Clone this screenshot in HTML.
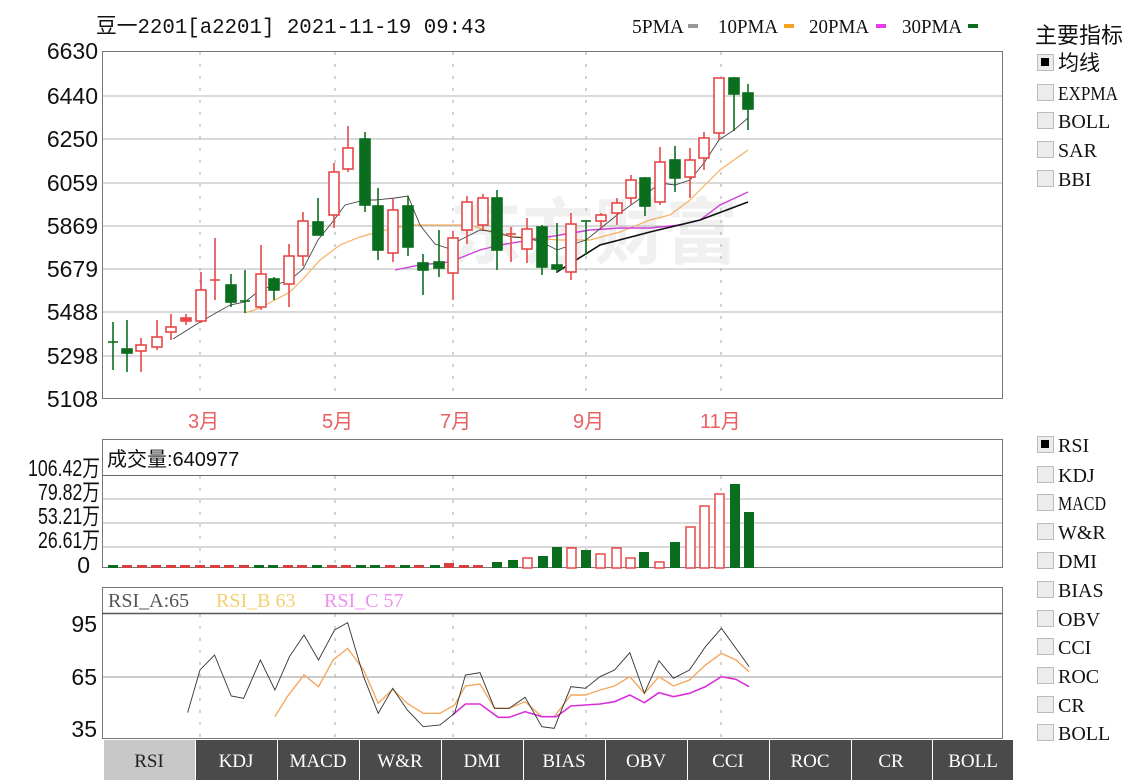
<!DOCTYPE html>
<html><head><meta charset="utf-8"><style>
html,body{margin:0;padding:0;background:#fff;width:1140px;height:780px;overflow:hidden}
svg{display:block}
.ax{font-family:"Liberation Sans",sans-serif;font-size:23px;fill:#111}
.mono{font-family:"Liberation Mono","Noto Sans CJK SC",monospace}
.cjk{font-family:"Liberation Sans","Noto Sans CJK SC",sans-serif}
.lbl{font-family:"Liberation Serif","Noto Serif CJK SC",serif;font-size:20px;fill:#111}
.tab{font-family:"Liberation Serif",serif;font-size:19px;fill:#fff}
</style></head><body>
<svg width="1140" height="780" viewBox="0 0 1140 780" xmlns="http://www.w3.org/2000/svg">
<!-- title -->
<text x="96" y="33" class="mono" font-size="21" fill="#111" textLength="390" lengthAdjust="spacingAndGlyphs">豆一2201[a2201] 2021-11-19 09:43</text>
<text x="632" y="33" class="lbl" font-size="19" textLength="52" lengthAdjust="spacingAndGlyphs">5PMA</text>
<rect x="688" y="24" width="10" height="4" fill="#999"/>
<text x="718" y="33" class="lbl" font-size="19" textLength="60" lengthAdjust="spacingAndGlyphs">10PMA</text>
<rect x="784" y="24" width="10" height="4" fill="#f5a020"/>
<text x="809" y="33" class="lbl" font-size="19" textLength="60" lengthAdjust="spacingAndGlyphs">20PMA</text>
<rect x="876" y="24" width="10" height="4" fill="#e83ce8"/>
<text x="902" y="33" class="lbl" font-size="19" textLength="60" lengthAdjust="spacingAndGlyphs">30PMA</text>
<rect x="968" y="24" width="10" height="4" fill="#0a6e1e"/>

<!-- watermark -->
<text x="450" y="258" class="cjk" font-size="72" font-weight="bold" fill="#f0f0f0">东方财富</text>

<!-- main chart box -->
<g stroke="#b4b4b4" stroke-width="1">
<line x1="102" y1="96" x2="1002" y2="96"/><line x1="102" y1="139" x2="1002" y2="139"/>
<line x1="102" y1="183" x2="1002" y2="183"/><line x1="102" y1="226" x2="1002" y2="226"/>
<line x1="102" y1="269" x2="1002" y2="269"/><line x1="102" y1="312" x2="1002" y2="312"/>
<line x1="102" y1="356" x2="1002" y2="356"/>
</g>
<g stroke="#aaa" stroke-width="1" stroke-dasharray="3,9">
<line x1="200" y1="52" x2="200" y2="398"/><line x1="335" y1="52" x2="335" y2="398"/>
<line x1="453" y1="52" x2="453" y2="398"/><line x1="586" y1="52" x2="586" y2="398"/>
<line x1="721" y1="52" x2="721" y2="398"/>
</g>
<rect x="102.5" y="51.5" width="900" height="347" fill="none" stroke="#777"/>
<g class="ax" text-anchor="end">
<text x="98" y="59">6630</text><text x="98" y="104">6440</text><text x="98" y="147">6250</text>
<text x="98" y="191">6059</text><text x="98" y="234">5869</text><text x="98" y="277">5679</text>
<text x="98" y="320">5488</text><text x="98" y="364">5298</text><text x="98" y="407">5108</text>
</g>
<g class="cjk" font-size="20" style="fill:#e86060">
<text x="188" y="428">3月</text><text x="322" y="428">5月</text><text x="440" y="428">7月</text>
<text x="573" y="428">9月</text><text x="700" y="428">11月</text>
</g>

<!-- MA lines -->
<polyline fill="none" stroke="#f7b060" stroke-width="1.2" points="245,313 260,308 290,292 303,279 320,260 340,245 360,237 378,232 395,228 410,225 440,225 470,225 500,235 530,238 560,240 590,240 620,232 650,220 670,215 690,200 705,185 720,170 748,150"/>
<polyline fill="none" stroke="#d040d8" stroke-width="1.4" points="395,270 420,265 450,262 480,250 500,245 530,240 560,235 590,230 620,228 650,228 680,225 700,220 720,205 748,192"/>
<polyline fill="none" stroke="#111" stroke-width="1.6" points="557,272 600,245 650,232 700,220 748,202"/>
<polyline fill="none" stroke="#444" stroke-width="0.9" points="173,339 200,322 230,305 245,302 260,290 290,280 303,269 318,240 334,220 345,205 365,200 375,200 395,198 408,196 420,225 435,244 447,248 460,240 480,230 497,232 511,237 526,238 542,242 557,250 571,245 586,240 601,228 617,215 631,205 645,195 660,183 675,185 690,180 704,163 719,140 734,130 748,118"/>

<!-- candles -->
<g stroke-width="1.6">
<g stroke="#0a6e1e" fill="#0a6e1e">
<line x1="113" y1="322" x2="113" y2="370"/><line x1="108" y1="342" x2="118" y2="342"/>
<line x1="127" y1="320" x2="127" y2="372"/><rect x="122" y="349" width="10" height="4"/>
<line x1="231" y1="274" x2="231" y2="307"/><rect x="226" y="285" width="10" height="17"/>
<line x1="245" y1="270" x2="245" y2="313"/><line x1="240" y1="301" x2="250" y2="301"/>
<line x1="274" y1="277" x2="274" y2="300"/><rect x="269" y="279" width="10" height="11"/>
<line x1="318" y1="198" x2="318" y2="234"/><rect x="313" y="222" width="10" height="13"/>
<line x1="365" y1="132" x2="365" y2="212"/><rect x="360" y="139" width="10" height="66"/>
<line x1="378" y1="188" x2="378" y2="260"/><rect x="373" y="206" width="10" height="44"/>
<line x1="408" y1="196" x2="408" y2="256"/><rect x="403" y="206" width="10" height="41"/>
<line x1="423" y1="254" x2="423" y2="295"/><rect x="418" y="263" width="10" height="7"/>
<line x1="439" y1="230" x2="439" y2="277"/><rect x="434" y="262" width="10" height="6"/>
<line x1="497" y1="190" x2="497" y2="270"/><rect x="492" y="198" width="10" height="52"/>
<line x1="542" y1="225" x2="542" y2="275"/><rect x="537" y="227" width="10" height="40"/>
<line x1="557" y1="223" x2="557" y2="273"/><rect x="552" y="265" width="10" height="4"/>
<line x1="586" y1="221" x2="586" y2="255"/><line x1="581" y1="221" x2="591" y2="221"/>
<line x1="645" y1="177" x2="645" y2="216"/><rect x="640" y="178" width="10" height="28"/>
<line x1="675" y1="146" x2="675" y2="192"/><rect x="670" y="160" width="10" height="18"/>
<line x1="734" y1="77" x2="734" y2="131"/><rect x="729" y="78" width="10" height="16"/>
<line x1="748" y1="84" x2="748" y2="130"/><rect x="743" y="93" width="10" height="16"/>
</g>
<g stroke="#e84848" fill="#fff">
<line x1="141" y1="338" x2="141" y2="372"/><rect x="136" y="345" width="10" height="6"/>
<line x1="157" y1="320" x2="157" y2="350"/><rect x="152" y="337" width="10" height="10"/>
<line x1="171" y1="314" x2="171" y2="340"/><rect x="166" y="327" width="10" height="5"/>
<line x1="186" y1="314" x2="186" y2="325"/><rect x="181" y="318" width="10" height="3" fill="#e84848"/>
<line x1="201" y1="272" x2="201" y2="323"/><rect x="196" y="290" width="10" height="31"/>
<line x1="215" y1="238" x2="215" y2="300"/><line x1="210" y1="280" x2="220" y2="280"/>
<line x1="261" y1="245" x2="261" y2="310"/><rect x="256" y="274" width="10" height="33"/>
<line x1="289" y1="244" x2="289" y2="307"/><rect x="284" y="256" width="10" height="28"/>
<line x1="303" y1="212" x2="303" y2="266"/><rect x="298" y="221" width="10" height="35"/>
<line x1="334" y1="163" x2="334" y2="228"/><rect x="329" y="172" width="10" height="43"/>
<line x1="348" y1="126" x2="348" y2="172"/><rect x="343" y="148" width="10" height="21"/>
<line x1="393" y1="198" x2="393" y2="262"/><rect x="388" y="210" width="10" height="43"/>
<line x1="453" y1="231" x2="453" y2="300"/><rect x="448" y="238" width="10" height="35"/>
<line x1="467" y1="196" x2="467" y2="244"/><rect x="462" y="202" width="10" height="28"/>
<line x1="483" y1="194" x2="483" y2="230"/><rect x="478" y="198" width="10" height="27"/>
<line x1="511" y1="227" x2="511" y2="262"/><line x1="506" y1="234" x2="516" y2="234"/>
<line x1="527" y1="218" x2="527" y2="263"/><rect x="522" y="229" width="10" height="20"/>
<line x1="571" y1="213" x2="571" y2="280"/><rect x="566" y="224" width="10" height="48"/>
<line x1="601" y1="213" x2="601" y2="228"/><rect x="596" y="215" width="10" height="6"/>
<line x1="617" y1="198" x2="617" y2="225"/><rect x="612" y="203" width="10" height="10"/>
<line x1="631" y1="175" x2="631" y2="205"/><rect x="626" y="180" width="10" height="18"/>
<line x1="660" y1="147" x2="660" y2="205"/><rect x="655" y="162" width="10" height="40"/>
<line x1="690" y1="148" x2="690" y2="198"/><rect x="685" y="160" width="10" height="17"/>
<line x1="704" y1="132" x2="704" y2="170"/><rect x="699" y="138" width="10" height="20"/>
<line x1="719" y1="78" x2="719" y2="140"/><rect x="714" y="78" width="10" height="55"/>
</g>
</g>

<!-- volume pane -->
<g stroke="#b4b4b4"><line x1="102" y1="499" x2="1002" y2="499"/><line x1="102" y1="523" x2="1002" y2="523"/><line x1="102" y1="547" x2="1002" y2="547"/></g>
<g stroke="#aaa" stroke-dasharray="3,9">
<line x1="200" y1="476" x2="200" y2="567"/><line x1="335" y1="476" x2="335" y2="567"/>
<line x1="453" y1="476" x2="453" y2="567"/><line x1="586" y1="476" x2="586" y2="567"/><line x1="721" y1="476" x2="721" y2="567"/>
</g>
<rect x="102.5" y="439.5" width="900" height="128" fill="none" stroke="#777"/>
<line x1="102" y1="475.5" x2="1002" y2="475.5" stroke="#666"/>
<text x="107" y="466" class="cjk" font-size="20" fill="#111">成交量:640977</text>
<g class="ax" font-size="21" text-anchor="end">
<text x="100" y="476" textLength="72" lengthAdjust="spacingAndGlyphs">106.42万</text>
<text x="100" y="500" textLength="62" lengthAdjust="spacingAndGlyphs">79.82万</text>
<text x="100" y="524" textLength="62" lengthAdjust="spacingAndGlyphs">53.21万</text>
<text x="100" y="548" textLength="62" lengthAdjust="spacingAndGlyphs">26.61万</text>
<text x="90" y="573">0</text>
</g>
<g>
<g fill="#0a6e1e"><rect x="108" y="565" width="10" height="3"/><rect x="254" y="565" width="10" height="3"/><rect x="268" y="565" width="10" height="3"/><rect x="312" y="565" width="10" height="3"/><rect x="356" y="565" width="10" height="3"/><rect x="400" y="565" width="10" height="3"/><rect x="370" y="565" width="10" height="3"/><rect x="430" y="565" width="10" height="3"/></g>
<g fill="#d84040"><rect x="122" y="565" width="10" height="3"/><rect x="137" y="565" width="10" height="3"/><rect x="151" y="565" width="10" height="3"/><rect x="166" y="565" width="10" height="3"/><rect x="180" y="565" width="10" height="3"/><rect x="195" y="565" width="10" height="3"/><rect x="210" y="565" width="10" height="3"/><rect x="224" y="565" width="10" height="3"/><rect x="239" y="565" width="10" height="3"/><rect x="283" y="565" width="10" height="3"/><rect x="297" y="565" width="10" height="3"/><rect x="327" y="565" width="10" height="3"/><rect x="341" y="565" width="10" height="3"/><rect x="385" y="565" width="10" height="3"/><rect x="414" y="565" width="10" height="3"/><rect x="444" y="563" width="10" height="5"/><rect x="459" y="565" width="10" height="3"/><rect x="473" y="565" width="10" height="3"/></g>
<g fill="#0a6e1e">
<rect x="492" y="562" width="10" height="6"/><rect x="508" y="560" width="10" height="8"/>
<rect x="538" y="556" width="10" height="12"/><rect x="552" y="547" width="10" height="21"/>
<rect x="581" y="550" width="10" height="18"/><rect x="639" y="552" width="10" height="16"/>
<rect x="670" y="542" width="10" height="26"/><rect x="730" y="484" width="10" height="84"/>
<rect x="744" y="512" width="10" height="56"/>
</g>
<g fill="#fff" stroke="#e84848" stroke-width="1.5">
<rect x="523" y="558" width="9" height="10"/><rect x="567" y="548" width="9" height="20"/>
<rect x="596" y="554" width="9" height="14"/><rect x="612" y="548" width="9" height="20"/>
<rect x="626" y="558" width="9" height="10"/><rect x="655" y="562" width="9" height="6"/>
<rect x="686" y="527" width="9" height="41"/><rect x="700" y="506" width="9" height="62"/>
<rect x="715" y="494" width="9" height="74"/>
</g>
</g>

<!-- RSI pane -->
<line x1="102" y1="677" x2="1002" y2="677" stroke="#999"/>
<g stroke="#aaa" stroke-dasharray="3,9">
<line x1="200" y1="614" x2="200" y2="738"/><line x1="335" y1="614" x2="335" y2="738"/>
<line x1="453" y1="614" x2="453" y2="738"/><line x1="586" y1="614" x2="586" y2="738"/><line x1="721" y1="614" x2="721" y2="738"/>
</g>
<rect x="102.5" y="587.5" width="900" height="151" fill="none" stroke="#777"/>
<line x1="102" y1="613.5" x2="1002" y2="613.5" stroke="#555" stroke-width="1.5"/>
<text x="108" y="607" class="lbl" font-size="18" style="fill:#555">RSI_A:65</text>
<text x="216" y="607" class="lbl" font-size="18" style="fill:#f5d070">RSI_B 63</text>
<text x="324" y="607" class="lbl" font-size="18" style="fill:#f090f0">RSI_C 57</text>
<g class="ax" text-anchor="end" font-size="22">
<text x="97" y="632">95</text><text x="97" y="685">65</text><text x="97" y="737">35</text>
</g>
<g transform="translate(0,580) scale(0.72727,0.33333)" fill="none">
<polyline vector-effect="non-scaling-stroke" stroke="#f5a860" stroke-width="1.4" points="378,410 395,350 418,285 438,320 458,240 478,205 500,270 520,370 540,328 560,370 582,400 605,400 625,375 640,318 660,312 680,385 700,385 722,365 745,410 762,410 785,345 805,345 825,330 845,318 866,290 886,340 906,290 926,318 948,300 970,255 992,220 1012,240 1030,275"/>
<polyline vector-effect="non-scaling-stroke" stroke="#d830d8" stroke-width="1.6" points="622,405 640,372 660,372 685,412 700,412 722,395 745,410 765,410 785,378 805,375 825,372 845,365 866,345 886,368 906,338 926,350 948,340 970,320 992,290 1012,298 1030,320"/>
<polyline vector-effect="non-scaling-stroke" stroke="#333" stroke-width="0.9" points="258,398 275,270 295,225 318,348 335,355 358,240 378,330 398,230 418,165 438,240 460,150 478,128 500,290 520,400 540,325 560,390 582,440 605,435 625,400 640,285 660,278 680,385 700,385 722,352 745,440 762,445 785,320 805,325 825,290 845,270 866,218 886,340 906,242 926,295 948,270 970,200 992,145 1012,205 1030,260"/>
</g>

<!-- tabs -->
<rect x="104" y="740" width="91" height="40" fill="#c8c8c8"/>
<g fill="#4a4a4a">
<rect x="196" y="740" width="81" height="40"/><rect x="278" y="740" width="81" height="40"/>
<rect x="360" y="740" width="81" height="40"/><rect x="442" y="740" width="81" height="40"/>
<rect x="524" y="740" width="81" height="40"/><rect x="606" y="740" width="81" height="40"/>
<rect x="688" y="740" width="81" height="40"/><rect x="770" y="740" width="81" height="40"/>
<rect x="852" y="740" width="80" height="40"/><rect x="933" y="740" width="80" height="40"/>
</g>
<g class="tab" text-anchor="middle">
<text x="149" y="767" style="fill:#222">RSI</text><text x="236" y="767">KDJ</text><text x="318" y="767">MACD</text>
<text x="400" y="767">W&amp;R</text><text x="482" y="767">DMI</text><text x="564" y="767">BIAS</text>
<text x="646" y="767">OBV</text><text x="728" y="767">CCI</text><text x="810" y="767">ROC</text>
<text x="891" y="767">CR</text><text x="973" y="767">BOLL</text>
</g>

<!-- right panel -->
<text x="1035" y="43" class="cjk" font-size="22" fill="#111">主要指标</text>
<g fill="#ececec" stroke="#bbb">
<rect x="1037.5" y="54.5" width="16" height="16"/><rect x="1037.5" y="84.5" width="16" height="16"/>
<rect x="1037.5" y="112.5" width="16" height="16"/><rect x="1037.5" y="141.5" width="16" height="16"/>
<rect x="1037.5" y="170.5" width="16" height="16"/>
<rect x="1037.5" y="436.5" width="16" height="16"/><rect x="1037.5" y="466.5" width="16" height="16"/>
<rect x="1037.5" y="494.5" width="16" height="16"/><rect x="1037.5" y="523.5" width="16" height="16"/>
<rect x="1037.5" y="552.5" width="16" height="16"/><rect x="1037.5" y="581.5" width="16" height="16"/>
<rect x="1037.5" y="610.5" width="16" height="16"/><rect x="1037.5" y="638.5" width="16" height="16"/>
<rect x="1037.5" y="667.5" width="16" height="16"/><rect x="1037.5" y="696.5" width="16" height="16"/>
<rect x="1037.5" y="724.5" width="16" height="16"/>
</g>
<rect x="1041" y="58" width="8" height="8" fill="#000"/>
<rect x="1041" y="440" width="8" height="8" fill="#000"/>
<text x="1058" y="70" class="cjk" font-size="21" fill="#111">均线</text>
<g class="lbl">
<text x="1058" y="100" textLength="60" lengthAdjust="spacingAndGlyphs">EXPMA</text><text x="1058" y="128">BOLL</text><text x="1058" y="157">SAR</text><text x="1058" y="186">BBI</text>
<text x="1058" y="452">RSI</text><text x="1058" y="482">KDJ</text><text x="1058" y="510" textLength="48" lengthAdjust="spacingAndGlyphs">MACD</text><text x="1058" y="539">W&amp;R</text>
<text x="1058" y="568">DMI</text><text x="1058" y="597">BIAS</text><text x="1058" y="626">OBV</text><text x="1058" y="654">CCI</text>
<text x="1058" y="683">ROC</text><text x="1058" y="712">CR</text><text x="1058" y="740">BOLL</text>
</g>
</svg>
</body></html>
